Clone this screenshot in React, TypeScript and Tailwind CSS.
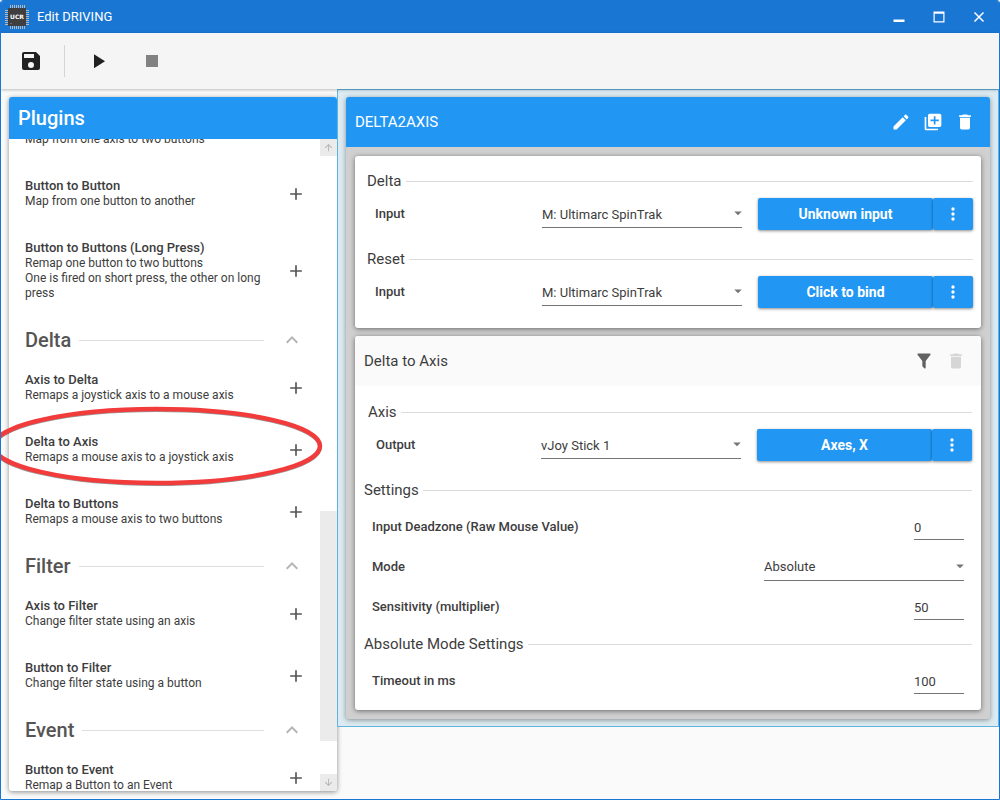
import React, { useState } from "react";
import clsx from "clsx";

interface Plugin {
  title?: string;
  lines: string[];
}

interface PluginGroup {
  name: string | null;
  plugins: Plugin[];
}

const PLUGIN_GROUPS: PluginGroup[] = [
  {
    name: null,
    plugins: [
      { lines: ["Map from one axis to two buttons"] },
      { title: "Button to Button", lines: ["Map from one button to another"] },
      {
        title: "Button to Buttons (Long Press)",
        lines: ["Remap one button to two buttons", "One is fired on short press, the other on long press"]
      }
    ]
  },
  {
    name: "Delta",
    plugins: [
      { title: "Axis to Delta", lines: ["Remaps a joystick axis to a mouse axis"] },
      { title: "Delta to Axis", lines: ["Remaps a mouse axis to a joystick axis"] },
      { title: "Delta to Buttons", lines: ["Remaps a mouse axis to two buttons"] }
    ]
  },
  {
    name: "Filter",
    plugins: [
      { title: "Axis to Filter", lines: ["Change filter state using an axis"] },
      { title: "Button to Filter", lines: ["Change filter state using a button"] }
    ]
  },
  {
    name: "Event",
    plugins: [{ title: "Button to Event", lines: ["Remap a Button to an Event"] }]
  }
];

const ICONS = {
  save: "M15,9H5V5H15M12,19A3,3 0 0,1 9,16A3,3 0 0,1 12,13A3,3 0 0,1 15,16A3,3 0 0,1 12,19M17,3H5C3.89,3 3,3.9 3,5V19A2,2 0 0,0 5,21H19A2,2 0 0,0 21,19V7L17,3Z",
  play: "M8,5.14V19.14L19,12.14L8,5.14Z",
  stop: "M18,18H6V6H18V18Z",
  pencil:
    "M20.71,7.04C21.1,6.65 21.1,6 20.71,5.63L18.37,3.29C18,2.9 17.35,2.9 16.96,3.29L15.12,5.12L18.87,8.87M3,17.25V21H6.75L17.81,9.93L14.06,6.18L3,17.25Z",
  duplicate:
    "M4 6H2v14c0 1.1.9 2 2 2h14v-2H4V6zm16-4H8c-1.1 0-2 .9-2 2v12c0 1.1.9 2 2 2h12c1.1 0 2-.9 2-2V4c0-1.1-.9-2-2-2zm-1 9h-4v4h-2v-4H9V9h4V5h2v4h4v2z",
  trash: "M19,4H15.5L14.5,3H9.5L8.5,4H5V6H19M6,19A2,2 0 0,0 8,21H16A2,2 0 0,0 18,19V7H6V19Z",
  filter:
    "M14,12V19.88C14.04,20.18 13.94,20.5 13.71,20.71C13.32,21.1 12.69,21.1 12.3,20.71L10.29,18.7C10.06,18.47 9.96,18.16 10,17.87V12H9.97L4.21,4.62C3.87,4.19 3.95,3.56 4.38,3.22C4.57,3.08 4.78,3 5,3H19C19.22,3 19.43,3.08 19.62,3.22C20.05,3.56 20.13,4.19 19.79,4.62L14.03,12H14Z",
  dots: "M12,16A2,2 0 0,1 14,18A2,2 0 0,1 12,20A2,2 0 0,1 10,18A2,2 0 0,1 12,16M12,10A2,2 0 0,1 14,12A2,2 0 0,1 12,14A2,2 0 0,1 10,12A2,2 0 0,1 12,10M12,4A2,2 0 0,1 14,6A2,2 0 0,1 12,8A2,2 0 0,1 10,6A2,2 0 0,1 12,4Z",
  plus: "M19,13H13V19H11V13H5V11H11V5H13V11H19V13Z",
  chevronUp: "M7.41,15.41L12,10.83L16.59,15.41L18,14L12,8L6,14L7.41,15.41Z",
  arrowUp: "M13,20H11V8L5.5,13.5L4.08,12.08L12,4.16L19.92,12.08L18.5,13.5L13,8V20Z",
  arrowDown: "M11,4H13V16L18.5,10.5L19.92,11.92L12,19.84L4.08,11.92L5.5,10.5L11,16V4Z",
  caret: "M7,10L12,15L17,10H7Z"
};

function Icon({ name, className }: { name: keyof typeof ICONS; className: string }) {
  return (
    <svg viewBox="0 0 24 24" fill="currentColor" className={clsx("shrink-0", className)} aria-hidden="true">
      <path d={ICONS[name]} />
    </svg>
  );
}

function ChipLogo() {
  const pins = [5, 7, 9, 11, 13, 15, 17, 19];
  return (
    <svg viewBox="0 0 24 24" className="w-6 h-6 shrink-0" aria-hidden="true">
      {pins.map((p) => (
        <g key={p} fill="#b9b9b9">
          <rect x={p} y="0" width="1" height="24" />
          <rect x="0" y={p} width="24" height="1" />
        </g>
      ))}
      <rect x="3" y="3" width="18" height="18" rx="1" fill="#3f3f3f" />
      <rect x="5" y="18" width="2" height="1" fill="#6b6b6b" />
      <text x="12" y="14" fontSize="6" fontWeight="700" textAnchor="middle" fill="#ffffff" fontFamily="DejaVu Sans, sans-serif">
        UCR
      </text>
    </svg>
  );
}

function TitleBar() {
  return (
    <header className="h-8 shrink-0 flex items-center bg-[#1976d2] text-white pl-1">
      <ChipLogo />
      <h1 className="flex-1 pl-2 text-[13px] leading-4">Edit DRIVING</h1>
      <button className="w-10 h-8 flex items-center justify-center" aria-label="Minimize">
        <svg viewBox="0 0 12 12" className="w-3 h-3">
          <rect x="0.5" y="8.5" width="11" height="2.5" fill="#fff" />
        </svg>
      </button>
      <button className="w-10 h-8 flex items-center justify-center" aria-label="Maximize">
        <svg viewBox="0 0 12 12" className="w-3 h-3" fill="#fff">
          <path fillRule="evenodd" d="M0.5 0.5H11.5V11.5H0.5ZM1.7 2.8V10.3H10.3V2.8Z" />
        </svg>
      </button>
      <button className="w-10 h-8 flex items-center justify-center" aria-label="Close">
        <svg viewBox="0 0 12 12" className="w-3 h-3" stroke="#fff" strokeWidth="1.5">
          <path d="M1.5 1.5L10.5 10.5M10.5 1.5L1.5 10.5" />
        </svg>
      </button>
    </header>
  );
}

function Toolbar() {
  return (
    <div className="relative z-10 h-14 shrink-0 flex items-center bg-[#f5f5f5] pl-[14px] shadow-[0_1px_3px_rgba(0,0,0,0.25)]">
      <button className="w-8 h-8 flex items-center justify-center text-[#212121]" aria-label="Save">
        <Icon name="save" className="w-6 h-6" />
      </button>
      <div className="w-px h-8 bg-[#d4d4d4] ml-[17px] mr-[17px]" />
      <button className="w-8 h-8 flex items-center justify-center text-[#212121]" aria-label="Run">
        <Icon name="play" className="w-6 h-6" />
      </button>
      <button className="w-8 h-8 ml-[22px] flex items-center justify-center text-[#828282]" aria-label="Stop" disabled>
        <Icon name="stop" className="w-6 h-6" />
      </button>
    </div>
  );
}

function PluginRow({ plugin }: { plugin: Plugin }) {
  return (
    <li className="flex items-center pt-4 pb-[15px] pl-4 pr-2">
      <div className="flex-1 pr-4">
        <h4 className="min-h-4 text-[13px] leading-4 font-medium">{plugin.title}</h4>
        {plugin.lines.map((line) => (
          <p key={line} className="text-xs leading-[15px]">
            {line}
          </p>
        ))}
      </div>
      <button
        className="w-8 h-5 flex items-center justify-center text-[#555]"
        aria-label={`Add ${plugin.title ?? plugin.lines[0]}`}
      >
        <Icon name="plus" className="w-5 h-5" />
      </button>
    </li>
  );
}

function PluginPanel() {
  return (
    <aside className="w-[328px] shrink-0 flex flex-col bg-white rounded-[3px] overflow-hidden shadow-[0_1px_5px_rgba(0,0,0,0.45)]">
      <h2 className="h-[42px] shrink-0 flex items-center pl-[9px] bg-[#2196f3] text-white text-xl font-medium">
        Plugins
      </h2>
      <div className="flex-1 min-h-0 flex overflow-hidden">
        <div className="flex-1 min-w-0">
          {/* list is scrolled part of the way into its first entry */}
          <div className="-mt-[39px]">
            {PLUGIN_GROUPS.map((group, idx) => (
              <section key={idx}>
                {group.name && (
                  <div className="flex items-center h-10 pt-2 pl-4 pr-3">
                    <h3 className="text-xl leading-8 font-medium text-[#555]">{group.name}</h3>
                    <div className="flex-1 h-px bg-[#dedede] ml-2 mr-3" />
                    <button className="w-8 h-8 flex items-center justify-center text-[#b4b4b4]" aria-label={`Collapse ${group.name}`}>
                      <Icon name="chevronUp" className="w-6 h-6" />
                    </button>
                  </div>
                )}
                <ul>
                  {group.plugins.map((plugin) => (
                    <PluginRow key={plugin.lines[0]} plugin={plugin} />
                  ))}
                </ul>
              </section>
            ))}
          </div>
        </div>

        {/* Scrollbar */}
        <div className="w-[17px] shrink-0 flex flex-col">
          <button className="h-[17px] flex items-center justify-center bg-[#ebebeb] text-[#b4b4b4]" aria-label="Scroll up">
            <Icon name="arrowUp" className="w-[11px] h-[11px]" />
          </button>
          <div className="flex-1 flex flex-col justify-end pb-[33px]">
            <div className="h-[230px] bg-[#ebebeb]" />
          </div>
          <button className="h-[17px] flex items-center justify-center bg-[#ebebeb] text-[#b4b4b4]" aria-label="Scroll down">
            <Icon name="arrowDown" className="w-[11px] h-[11px]" />
          </button>
        </div>
      </div>
    </aside>
  );
}

function GroupHeading({ children }: { children: React.ReactNode }) {
  return (
    <div className="flex items-center h-5">
      <h3 className="text-[15px] leading-5">{children}</h3>
      <div className="flex-1 h-px bg-[#dcdcdc] ml-1" />
    </div>
  );
}

function Dropdown({ id, value, className }: { id: string; value: string; className?: string }) {
  return (
    <div className="relative w-[200px] shrink-0">
      <select
        id={id}
        defaultValue={value}
        className={clsx(
          "block w-full h-7 appearance-none bg-transparent border-b border-[#757575] text-[13px] outline-none",
          className
        )}
      >
        <option>{value}</option>
      </select>
      <Icon name="caret" className="absolute -right-[5px] top-1 w-[18px] h-[18px] text-[#757575] pointer-events-none" />
    </div>
  );
}

interface BindingRowProps {
  id: string;
  label: string;
  device: string;
  binding: string;
}

function BindingRow({ id, label, device, binding }: BindingRowProps) {
  return (
    <div className="flex items-center h-8 mt-[7px] pl-2">
      <label htmlFor={id} className="flex-1 text-[13px] leading-4 font-medium">
        {label}
      </label>
      <Dropdown id={id} value={device} className="pt-0.5" />
      <div className="flex ml-4 text-white">
        <button className="w-[175px] h-8 rounded-[2px] bg-[#2196f3] text-sm font-bold shadow-[0_1px_3px_rgba(0,0,0,0.45)]">
          {binding}
        </button>
        <button
          className="w-10 h-8 rounded-[2px] bg-[#2196f3] flex items-center justify-center shadow-[0_1px_3px_rgba(0,0,0,0.45)]"
          aria-label={`${binding} options`}
        >
          <Icon name="dots" className="w-5 h-5" />
        </button>
      </div>
    </div>
  );
}

function SettingRow({ id, label, children }: { id: string; label: string; children: React.ReactNode }) {
  return (
    <div className="flex items-center justify-between h-10 px-2">
      <label htmlFor={id} className="text-[13px] leading-4 font-medium">
        {label}
      </label>
      {children}
    </div>
  );
}

function NumberField({ id, initial }: { id: string; initial: string }) {
  const [value, setValue] = useState(initial);
  return (
    <input
      id={id}
      type="text"
      inputMode="numeric"
      value={value}
      onChange={(e) => setValue(e.target.value)}
      className="w-[50px] h-[26px] pt-0.5 bg-transparent border-b border-[#757575] text-[13px] outline-none"
    />
  );
}

function HeaderButton({ icon, label, className }: { icon: keyof typeof ICONS; label: string; className?: string }) {
  return (
    <button className={clsx("w-8 h-8 flex items-center justify-center", className)} aria-label={label}>
      <Icon name={icon} className="w-5 h-5" />
    </button>
  );
}

function MappingCard() {
  return (
    <article className="rounded-[3px] bg-[#d0d0d0] shadow-[0_1px_5px_rgba(0,0,0,0.4)]">
      <div className="h-[50px] flex items-center pl-[9px] pr-[9px] rounded-t-[3px] bg-[#2196f3] text-white">
        <h2 className="flex-1 text-[15px]">DELTA2AXIS</h2>
        <HeaderButton icon="pencil" label="Rename mapping" />
        <HeaderButton icon="duplicate" label="Duplicate mapping" />
        <HeaderButton icon="trash" label="Delete mapping" />
      </div>

      <div className="p-[9px] flex flex-col gap-2">
        {/* Inputs */}
        <section className="bg-white rounded-[3px] pt-[15px] pb-5 pl-3 pr-2 shadow-[0_1px_5px_rgba(0,0,0,0.5)]">
          <GroupHeading>Delta</GroupHeading>
          <BindingRow id="delta-input" label="Input" device="M: Ultimarc SpinTrak" binding="Unknown input" />
          <div className="mt-[19px]">
            <GroupHeading>Reset</GroupHeading>
            <BindingRow id="reset-input" label="Input" device="M: Ultimarc SpinTrak" binding="Click to bind" />
          </div>
        </section>

        {/* Plugin instance */}
        <section className="bg-white rounded-[3px] shadow-[0_1px_5px_rgba(0,0,0,0.5)]">
          <div className="h-[50px] flex items-center pl-[9px] pr-[9px] rounded-t-[3px] bg-[#fafafa]">
            <h3 className="flex-1 text-[15px]">Delta to Axis</h3>
            <HeaderButton icon="filter" label="Filters" className="text-[#616161]" />
            <HeaderButton icon="trash" label="Remove plugin" className="text-[#d6d6d6]" />
          </div>
          <div className="pt-4 pb-[9px] pl-[9px] pr-[9px]">
            <div className="pl-1">
              <GroupHeading>Axis</GroupHeading>
              <BindingRow id="axis-output" label="Output" device="vJoy Stick 1" binding="Axes, X" />
            </div>
            <div className="mt-[19px]">
              <GroupHeading>Settings</GroupHeading>
              <div className="pt-[7px]">
                <SettingRow id="deadzone" label="Input Deadzone (Raw Mouse Value)">
                  <NumberField id="deadzone" initial="0" />
                </SettingRow>
                <SettingRow id="mode" label="Mode">
                  <Dropdown id="mode" value="Absolute" />
                </SettingRow>
                <SettingRow id="sensitivity" label="Sensitivity (multiplier)">
                  <NumberField id="sensitivity" initial="50" />
                </SettingRow>
              </div>
            </div>
            <div className="mt-[7px]">
              <GroupHeading>Absolute Mode Settings</GroupHeading>
              <div className="pt-[7px]">
                <SettingRow id="timeout" label="Timeout in ms">
                  <NumberField id="timeout" initial="100" />
                </SettingRow>
              </div>
            </div>
          </div>
        </section>
      </div>
    </article>
  );
}

export default function App() {
  return (
    <div className="relative h-screen flex flex-col overflow-hidden rounded-t-[3px] border border-[#1976d2] bg-[#fafafa] font-['Roboto',sans-serif] text-[#3d3d3d]">
      <TitleBar />
      <Toolbar />
      <main className="flex-1 min-h-0 flex">
        <div className="flex pl-2 pt-2 pb-2">
          <PluginPanel />
        </div>
        <div className="flex-1 min-w-0">
          <div className="border border-[#5fb4de] bg-[#dcebf2] pt-[7px] pb-[7px] pl-2 pr-2">
            <MappingCard />
          </div>
        </div>
      </main>

      {/* Hand-drawn highlight around the Delta to Axis plugin */}
      <svg className="absolute left-0 top-[400px] z-20 w-[330px] h-[92px] pointer-events-none" viewBox="0 0 330 92" fill="none" aria-hidden="true">
        <ellipse cx="156" cy="46" rx="163" ry="37" stroke="#000" strokeOpacity="0.4" strokeWidth="4" />
        <ellipse cx="156" cy="45" rx="163" ry="37" stroke="#f23b3b" strokeWidth="4.5" />
      </svg>
    </div>
  );
}
